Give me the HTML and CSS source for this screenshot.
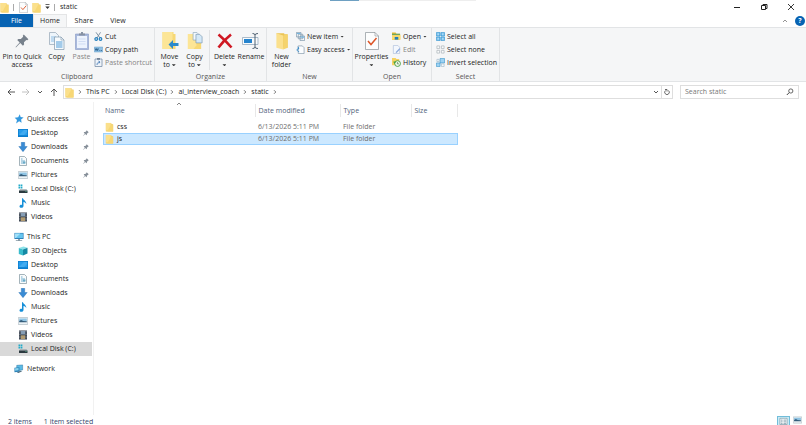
FILE: index.html
```html
<!DOCTYPE html>
<html lang="en">
<head>
<meta charset="utf-8">
<title>static</title>
<link rel="stylesheet" href="styles.css">
</head>
<body>
<svg class="sprite" aria-hidden="true">
  <symbol id="folder" viewBox="0 0 9 11"><path fill="#efcb60" d="M.5 1h6v1.500h2V10.500h-8z"/><path fill="#fbe08c" d="M.5 1h5.500v8.500H.5z"/><path fill="#f7d775" d="M6 3h2.500v7.500H2z"/></symbol>
  <symbol id="pin" viewBox="0 0 12 12"><path fill="#77818c" d="M7.500.5l4 4-1 .8-.8-.2-2 2 .1 2-1 1-2.300-2.300L.8 11.500l-.3-.3L4 7.300 1.900 5.200l1-1 2.100.1 2-2-.3-.9z"/></symbol>
  <symbol id="copy" viewBox="0 0 16 18"><path fill="#eef5fb" stroke="#93a5b5" stroke-width=".7" d="M.5.5h6l3 3v9h-9z"/><path fill="#bfdaf0" d="M2 4h5v6H2z"/><path fill="#f6fafd" stroke="#7f98ad" stroke-width=".7" d="M5.500 5h6.500l3 3v9.500H5.500z"/><path fill="#a3cbea" d="M7 9h6.500v7H7z"/><path fill="none" stroke="#7f98ad" stroke-width=".6" d="M12 5v3h3"/></symbol>
  <symbol id="paste" viewBox="0 0 14 18"><path fill="#a9b9dc" stroke="#8799c4" stroke-width=".6" d="M.5 2h13v15.500H.5z"/><path fill="#edf3fd" d="M2 4h10v12H2z"/><path fill="#8792a3" d="M4 1.500h2V0h2v1.500h2v2H4z"/><path stroke="#c4d2ee" stroke-width=".7" d="M3.500 7h7M3.500 9.500h7M3.500 12h7"/></symbol>
  <symbol id="cut" viewBox="0 0 9 9"><path fill="none" stroke="#8194a5" d="M2 .3L6 6M6.500.3L3 6"/><g fill="none" stroke="#237fbd" stroke-width="1.200"><circle cx="2.200" cy="7" r="1.300"/><circle cx="6.500" cy="7" r="1.300"/></g></symbol>
  <symbol id="path" viewBox="0 0 9 7"><path fill="#8fc1e5" stroke="#669dc4" stroke-width=".5" d="M.3 1h8.400v5H.3z"/><path fill="none" stroke="#174e7a" stroke-width=".8" d="M1.200 2.500l.8 2 .8-2 .8 2 .8-2M5.500 4.500h.8m.8 0h.8"/></symbol>
  <symbol id="shortcut" viewBox="0 0 9 9"><path fill="#eef3f9" stroke="#7890aa" stroke-width=".8" d="M1 1h7v7.500H1z"/><path fill="#728295" d="M3 0h3v1.800H3z"/><path fill="none" stroke="#5082ba" stroke-width=".9" d="M3 7c0-2 1-3 3-3M4.500 3L6 4 4.800 5.500"/></symbol>
  <symbol id="move" viewBox="0 0 17 18"><path fill="#f7d875" d="M1 0h11v2h2v15H1z"/><path fill="#fce596" d="M1 0h10v14l-3 3H1z"/><path fill="#2d8acb" d="M7 12.500L11.500 8v3H17v3h-5.500v3z"/></symbol>
  <symbol id="copyto" viewBox="0 0 17 19"><path fill="#f7d875" d="M1 2h10v2h4v14H1z"/><path fill="#fce596" d="M1 2h9v12l-3 4H1z"/><path fill="#f2f8fd" stroke="#8ba5ba" stroke-width=".7" d="M6.500.5h4l2 2v6h-6z"/><path fill="#d4e8f7" stroke="#7897b1" stroke-width=".7" d="M9.500 2.500h4l2.500 2.500v6.500H9.500z"/></symbol>
  <symbol id="delete" viewBox="0 0 16 16"><path fill="none" stroke="#cf1823" stroke-width="2.600" d="M1.500 1.500Q8 7 14.500 14.500M14 1.500Q7 7 1.500 14.500"/></symbol>
  <symbol id="rename" viewBox="0 0 18 17"><path fill="#f8fbfd" stroke="#8aa1b4" stroke-width=".7" d="M.5 5h15.500v7H.5z"/><path fill="#2584ce" d="M2 6.500h8v4H2z"/><path fill="none" stroke="#506273" d="M10.500 1q2.500 0 2.500 1.500v12q0 1.500-2.500 1.500M16 1q-3 0-3 1.500M16 16q-3 0-3-1.500"/></symbol>
  <symbol id="newfolder" viewBox="0 0 12 16"><path fill="#ebc454" d="M1 1h7v1h3v12H7z"/><path fill="#fbe08d" d="M1 1l6 2v12.500L1 14z"/><path fill="#f5d36c" d="M7 3l4-1v12l-4 1.500z"/></symbol>
  <symbol id="newitem" viewBox="0 0 10 10"><path fill="#f5f9fc" stroke="#708b9f" stroke-width=".7" d="M.5.5h5v5h-5zM2.500 2.500h5v5h-5zM4.500 4.500h5v5h-5z"/><path fill="#75b5df" d="M1 1h4v1.200H1zM5 5h4v1.300H5z"/></symbol>
  <symbol id="easy" viewBox="0 0 9 10"><path fill="#fbfdff" stroke="#7890a2" stroke-width=".7" d="M2 1h4.500l2 2v6.500H2z"/><path fill="none" stroke="#2e86c7" d="M3 7.500C0 7 .3 4 2.500 3.500M1.300 2.300l1.500 1L1.700 5"/></symbol>
  <symbol id="properties" viewBox="0 0 14 18"><path fill="#fcfdfd" stroke="#8b9298" stroke-width=".7" d="M.5.5h9.500l3.500 3.500v13.500H.5z"/><path fill="none" stroke="#8b9298" stroke-width=".6" d="M10 .5V4h3.500"/><path fill="none" stroke="#dc5528" stroke-width="1.500" d="M3 9l3 3.500L11.500 6"/></symbol>
  <symbol id="open" viewBox="0 0 10 9"><path fill="#e8b92e" d="M0 0h4l1 1.500h4V8H0z"/><path fill="#fbdc6e" d="M0 3h9.500v5H0z"/><path fill="#227fb9" d="M3 8V5h4v3z"/><path fill="#3aa078" d="M0 1.500h9v1H0z"/></symbol>
  <symbol id="edit" viewBox="0 0 9 10"><path fill="#f3f7fd" stroke="#a9badb" stroke-width=".7" d="M1 .5h5l2 2v7H1z"/><path fill="none" stroke="#89a8dc" stroke-width="1.500" d="M8.300 4L4 8.500"/></symbol>
  <symbol id="history" viewBox="0 0 10 10"><path fill="#f6d261" d="M0 0h4l1 1h3v7H0z"/><circle cx="6.200" cy="6.200" r="3.200" fill="#eef7e9" stroke="#459b42"/><path fill="none" stroke="#356f35" stroke-width=".7" d="M6 4.500v2h1.700"/><path fill="#45a33d" d="M1.500 4h3.200L2.500 6.800z"/></symbol>
  <symbol id="selall" viewBox="0 0 10 10"><path fill="#6ab8e9" stroke="#268bca" stroke-width=".6" d="M.5.5h4v4h-4zM5.500.5h4v4h-4zM.5 5.500h4v4h-4zM5.500 5.500h4v4h-4z"/><path fill="#a9d9f5" d="M1.500 1.500h2v2h-2zM6.500 1.500h2v2h-2zM1.500 6.500h2v2h-2zM6.500 6.500h2v2h-2z"/></symbol>
  <symbol id="selnone" viewBox="0 0 10 10"><path fill="#fafbfc" stroke="#a4adb4" stroke-width=".7" d="M1 1h3v3H1zM6 1h3v3H6zM1 6h3v3H1zM6 6h3v3H6z"/></symbol>
  <symbol id="selinv" viewBox="0 0 10 10"><path fill="#9dd2f3" stroke="#2889c4" stroke-width=".6" d="M4.500.5h5v5h-5zM.5 5.500h4v4h-4z"/><path fill="#f4f9fc" stroke="#8dacbf" stroke-width=".6" d="M1 1.500h2.500v2.500H1zM6 6.500h3v3H6z"/></symbol>
  <symbol id="star" viewBox="0 0 10 10"><path fill="#3499df" d="M5.800.3l.8 2.800 3 .5-2.500 1.900.5 3.200-2.500-1.500-3 2.300.9-3.500L.7 3.700l3.500-.4z"/></symbol>
  <symbol id="desktop" viewBox="0 0 10 8"><path fill="#0b7ccd" d="M0 0h10v8H0z"/><path fill="#279dec" d="M.7.7h8.600v5.600H.7z"/><path fill="#42abf0" d="M1 6l5-5h3v2L6 6z"/></symbol>
  <symbol id="down" viewBox="0 0 9 10"><path fill="#398bd4" stroke="#246caf" stroke-width=".4" d="M2.800.3h3.400v4.200h2.500L4.500 9.700.3 4.500h2.500z"/></symbol>
  <symbol id="docs" viewBox="0 0 8 10"><path fill="#f8fbfc" stroke="#80949e" stroke-width=".7" d="M.5.5h5l2 2v7h-7z"/><path stroke="#4b9bc1" stroke-width=".8" d="M2 3h1.500M2 5h4M2 7h4"/><path fill="#69abc8" d="M4 5.500h2.500v2H4z"/></symbol>
  <symbol id="pics" viewBox="0 0 10 8"><path fill="#edf3f6" stroke="#a5b2bb" stroke-width=".6" d="M.3.5h9.400v7H.3z"/><path fill="#8fc4e4" d="M1.200 1.500h7.600v2.800H1.200z"/><path fill="#345d7b" d="M1.200 4l2-1 2 1 3.600.3v1H1.200z"/></symbol>
  <symbol id="disk" viewBox="0 0 10 9"><path fill="#22abc9" d="M.5 0h1.700v1.700H.5zM2.700 0h1.700v1.700H2.700zM.5 2.200h1.700v1.700H.5zM2.700 2.200h1.700v1.700H2.700z"/><path fill="#9ca8ad" d="M2 4.700h6.500l1 1.300H1z"/><path fill="#2b393f" d="M1 6h8.500v2.500H1z"/><path fill="#62d6a1" d="M7.500 6.800h1v.7h-1z"/></symbol>
  <symbol id="music" viewBox="0 0 9 10"><path fill="#168fd8" d="M3.500.2h1c.3 2 3.500 2.500 3.300 5.800-.6-1.500-1.800-2-2.800-2.100v4c0 2.200-4 2.600-4 .5 0-1.400 1.400-1.900 2.500-1.500z"/></symbol>
  <symbol id="video" viewBox="0 0 9 10"><path fill="#343d4a" d="M.5.5h8v9h-8z"/><path fill="#879eb5" d="M2.300 1h4.400v3.500H2.300z"/><path fill="#b19b70" d="M2.300 5.300h4.400V9H2.300z"/><path stroke="#d8dde2" stroke-width=".7" stroke-dasharray=".8 .8" d="M1.400 1v8M7.600 1v8"/></symbol>
  <symbol id="pc" viewBox="0 0 11 10"><path fill="#297bb5" d="M.5.5h10v6.700H.5z"/><path fill="#66c5ef" d="M1.200 1.200h8.600v5H1.200z"/><path fill="#a3e0f8" d="M1.200 1.200H7l-5 5h-.8z"/><path fill="#8295a2" d="M4.500 7.200h2v1.300H9v.8H2v-.8h2.500z"/></symbol>
  <symbol id="cube" viewBox="0 0 10 10"><path fill="#8ce2e9" d="M.8 2L5.500.5l4 1.200L5 3.500z"/><path fill="#39bccc" d="M.8 2L5 3.500v6L.8 8z"/><path fill="#1589a4" d="M5 3.500l4.500-1.800V7.500L5 9.500z"/></symbol>
  <symbol id="network" viewBox="0 0 11 10"><path fill="#5abbe6" stroke="#276e9b" stroke-width=".5" d="M3 1l6.500-.5V6L3 7z"/><path fill="#2e83b8" d="M.5 3.500L6 3v5L.5 8.500z"/><path fill="#88d4ef" d="M1.200 4.200L5 3.800v2.700l-3.800.5z"/><path fill="#526f80" d="M7 7l2 .5-4 2-2-.7z"/></symbol>
  <symbol id="smallpin" viewBox="0 0 6 6"><path fill="#87909a" d="M3.700.3l2 2-.6.4-1.200 1v1l-.5.5-1.200-1.100L.5 5.700.2 5.500l1.600-1.800L.7 2.600l.6-.5h1l1-1.200z"/></symbol>
  <symbol id="chev" viewBox="0 0 6 6"><path fill="none" stroke="currentColor" stroke-width=".9" d="M1 2l2 2 2-2"/></symbol>
  <symbol id="next" viewBox="0 0 4 6"><path fill="none" stroke="#555" stroke-width=".8" d="M1 1.200L2.800 3 1 4.800"/></symbol>
  <symbol id="back" viewBox="0 0 8 8"><path fill="none" stroke="currentColor" stroke-width=".9" d="M8 4H1M4 1L1 4l3 3"/></symbol>
</svg>
<div class="window">
  <header class="titlebar">
    <svg class="i9"><use href="#folder"/></svg><span class="bar"></span>
    <button class="quick" aria-label="Properties"><svg class="i9"><use href="#properties"/></svg></button>
    <button class="quick" aria-label="New folder"><svg class="i9"><use href="#folder"/></svg></button>
    <button class="custom" aria-label="Customize"><svg viewBox="0 0 5 6"><path fill="#333" d="M.5 0h4v.8h-4zM.3 2.500h4.400L2.500 5z"/></svg></button><span class="bar"></span>
    <h1>static</h1>
    <span class="progress"><i></i></span>
    <div class="controls">
      <button aria-label="Minimize"><svg viewBox="0 0 8 8"><path stroke="#222" d="M1 4.500h6"/></svg></button>
      <button aria-label="Restore"><svg viewBox="0 0 8 8"><path fill="none" stroke="#222" d="M1.500 2.500h4v4h-4zM3 2.500v-1h4v4H5.500"/></svg></button>
      <button aria-label="Close"><svg viewBox="0 0 8 8"><path stroke="#222" stroke-width=".9" d="M1 1l6 6M7 1L1 7"/></svg></button>
    </div>
  </header>
  <nav class="tabs">
    <button class="file">File</button><button class="active">Home</button><button>Share</button><button>View</button>
    <span class="grow"></span>
    <button class="collapse" aria-label="Collapse ribbon"><svg class="i6 flip"><use href="#chev"/></svg></button>
    <button class="help">?</button>
  </nav>
  <section class="ribbon">
    <div class="group clipboard">
      <div class="tools">
        <button class="big pinbtn"><svg><use href="#pin"/></svg><span>Pin to Quick<br>access</span></button>
        <button class="big"><svg><use href="#copy"/></svg><span>Copy</span></button>
        <button class="big muted"><svg><use href="#paste"/></svg><span>Paste</span></button>
        <div class="stack"><button><svg><use href="#cut"/></svg>Cut</button><button><svg><use href="#path"/></svg>Copy path</button><button class="muted"><svg><use href="#shortcut"/></svg>Paste shortcut</button></div>
      </div><h2>Clipboard</h2>
    </div>
    <div class="group organize">
      <div class="tools">
        <button class="big"><svg><use href="#move"/></svg><span>Move<br>to <i class="caret"></i></span></button>
        <button class="big"><svg><use href="#copyto"/></svg><span>Copy<br>to <i class="caret"></i></span></button>
        <span class="divider"></span>
        <button class="big"><svg class="small"><use href="#delete"/></svg><span>Delete<br><i class="caret"></i></span></button>
        <button class="big wide"><svg><use href="#rename"/></svg><span>Rename</span></button>
      </div><h2>Organize</h2>
    </div>
    <div class="group new">
      <div class="tools">
        <button class="big"><svg><use href="#newfolder"/></svg><span>New<br>folder</span></button>
        <div class="stack"><button><svg><use href="#newitem"/></svg>New item <i class="caret"></i></button><button><svg><use href="#easy"/></svg>Easy access <i class="caret"></i></button></div>
      </div><h2>New</h2>
    </div>
    <div class="group opening">
      <div class="tools">
        <button class="big props"><svg><use href="#properties"/></svg><span>Properties<br><i class="caret"></i></span></button>
        <div class="stack"><button><svg><use href="#open"/></svg>Open <i class="caret"></i></button><button class="muted"><svg><use href="#edit"/></svg>Edit</button><button><svg><use href="#history"/></svg>History</button></div>
      </div><h2>Open</h2>
    </div>
    <div class="group select">
      <div class="tools">
        <div class="stack"><button><svg><use href="#selall"/></svg>Select all</button><button><svg><use href="#selnone"/></svg>Select none</button><button><svg><use href="#selinv"/></svg>Invert selection</button></div>
      </div><h2>Select</h2>
    </div>
  </section>
  <section class="location">
    <div class="arrows">
      <button aria-label="Back"><svg class="i8"><use href="#back"/></svg></button>
      <button class="off" aria-label="Forward"><svg class="i8 flip"><use href="#back"/></svg></button>
      <button aria-label="Recent locations"><svg class="i6"><use href="#chev"/></svg></button>
      <button aria-label="Up"><svg class="i8 turn"><use href="#back"/></svg></button>
    </div>
    <div class="address">
      <svg class="i9"><use href="#folder"/></svg><svg class="next"><use href="#next"/></svg><a href="#">This PC</a><svg class="next"><use href="#next"/></svg><a href="#">Local Disk (C:)</a><svg class="next"><use href="#next"/></svg><a href="#">ai_interview_coach</a><svg class="next"><use href="#next"/></svg><a href="#">static</a><svg class="next"><use href="#next"/></svg>
      <span class="grow"></span>
      <button aria-label="Previous locations"><svg class="i6"><use href="#chev"/></svg></button>
      <button class="refresh" aria-label="Refresh"><svg class="i6" viewBox="0 0 6 6"><path fill="none" stroke="#444" stroke-width=".8" d="M1.500 1.500A2.300 2.300 0 1 0 4.500 1.500M1 .5h2v2"/></svg></button>
    </div>
    <label class="search"><input type="text" placeholder="Search static" aria-label="Search static"><svg class="i8" viewBox="0 0 8 8"><circle cx="4.800" cy="3" r="2.100" fill="none" stroke="#444" stroke-width=".8"/><path stroke="#444" d="M3.300 4.500L.8 7"/></svg></label>
  </section>
  <main class="content">
    <nav class="sidebar">
      <a href="#" class="root"><svg><use href="#star"/></svg>Quick access</a>
      <a href="#"><svg><use href="#desktop"/></svg>Desktop<svg class="pinned"><use href="#smallpin"/></svg></a>
      <a href="#"><svg><use href="#down"/></svg>Downloads<svg class="pinned"><use href="#smallpin"/></svg></a>
      <a href="#"><svg><use href="#docs"/></svg>Documents<svg class="pinned"><use href="#smallpin"/></svg></a>
      <a href="#"><svg><use href="#pics"/></svg>Pictures<svg class="pinned"><use href="#smallpin"/></svg></a>
      <a href="#"><svg><use href="#disk"/></svg>Local Disk (C:)</a>
      <a href="#"><svg><use href="#music"/></svg>Music</a>
      <a href="#"><svg><use href="#video"/></svg>Videos</a>
      <a href="#" class="root"><svg><use href="#pc"/></svg>This PC</a>
      <a href="#"><svg><use href="#cube"/></svg>3D Objects</a>
      <a href="#"><svg><use href="#desktop"/></svg>Desktop</a>
      <a href="#"><svg><use href="#docs"/></svg>Documents</a>
      <a href="#"><svg><use href="#down"/></svg>Downloads</a>
      <a href="#"><svg><use href="#music"/></svg>Music</a>
      <a href="#"><svg><use href="#pics"/></svg>Pictures</a>
      <a href="#"><svg><use href="#video"/></svg>Videos</a>
      <a href="#" class="current"><svg><use href="#disk"/></svg>Local Disk (C:)</a>
      <a href="#" class="root"><svg><use href="#network"/></svg>Network</a>
    </nav>
    <div class="files">
      <table>
        <colgroup><col class="c-name"><col class="c-date"><col class="c-type"><col></colgroup>
        <thead><tr><th>Name<svg class="i6 sort"><use href="#chev"/></svg></th><th>Date modified</th><th>Type</th><th>Size</th></tr></thead>
        <tbody>
          <tr><td><span class="name"><svg class="i9"><use href="#folder"/></svg>css</span></td><td>6/13/2026 5:11 PM</td><td>File folder</td><td></td></tr>
          <tr class="selected"><td><span class="name"><svg class="i9"><use href="#folder"/></svg>js</span></td><td>6/13/2026 5:11 PM</td><td>File folder</td><td></td></tr>
        </tbody>
      </table>
    </div>
  </main>
  <footer class="status"><span>2 items</span><span>1 item selected</span><span class="grow"></span>
    <button class="view on" aria-label="Details"><svg viewBox="0 0 10 8"><path fill="#fff" stroke="#72909c" stroke-width=".7" d="M1 1h8v7H1z"/><path stroke="#547e91" stroke-width=".8" d="M2 3h2M5 3h3M2 5h2M5 5h3M2 7h2M5 7h3"/></svg></button>
    <button class="view" aria-label="Large icons"><svg><use href="#pics"/></svg></button>
  </footer>
</div>
</body>
</html>
```
FILE: styles.css
```css
* { box-sizing: border-box; }
body { margin: 0; background: #fff; color: #1c1c1c; font: 7px/8px "Open Sans", "Noto Sans", sans-serif; }
button, input { font: inherit; color: inherit; border: 0; padding: 0; margin: 0; background: none; }
a { color: inherit; text-decoration: none; }
h1, h2 { margin: 0; font: inherit; }
svg { display: block; flex: none; }
.sprite { position: absolute; width: 0; height: 0; }
.grow { flex: 1; }
.i6 { width: 6px; height: 6px; }
.i8 { width: 8px; height: 8px; }
.i9 { width: 9px; height: 11px; }
.flip { transform: rotate(180deg); }
.turn { transform: rotate(90deg); }
.window { height: 100vh; display: flex; flex-direction: column; overflow: hidden; }
.window > * { flex: none; }

.titlebar { position: relative; height: 14px; display: flex; align-items: center; }
.bar { width: 1px; height: 7px; margin: 0 5px 0 4px; background: #aaa; }
.quick { margin-right: 4px; }
.custom { width: 5px; }
.custom svg { width: 5px; height: 6px; }
.progress { position: absolute; top: 0; left: 41%; width: 18%; height: 1px; background: #eee; }
.progress i { display: block; width: 20%; height: 1px; background: #6ea0c2; }
.controls { margin-left: auto; padding-right: 2px; display: flex; }
.controls button { width: 27px; height: 12px; display: grid; place-items: center; }
.controls svg { width: 8px; height: 8px; }

.tabs { height: 13px; display: flex; }
.tabs button { width: 34px; }
.tabs .file { width: 33px; background: #0763b3; color: #fff; }
.tabs .active { background: #f5f6f7; border: solid #e4e5e6; border-width: 1px 1px 0; }
.tabs .collapse { width: 6px; color: #888; display: grid; place-items: center; }
.tabs .help { align-self: center; width: 10px; height: 10px; margin: 0 1px 0 7px; border-radius: 50%; background: #0763b3; color: #fff; font-weight: 700; }

.ribbon { height: 55px; display: flex; background: #f5f6f7; border: solid #e2e4e6; border-width: 1px 0; }
.group { display: flex; flex-direction: column; padding-top: 2px; border-right: 1px solid #e2e4e6; }
.group h2 { text-align: center; color: #555; line-height: 9px; }
.tools { flex: 1; display: flex; }
.clipboard { width: 155px; }
.organize { width: 112px; }
.new { width: 86px; }
.opening { width: 79px; }
.select { width: 68px; }
.big { width: 25px; display: flex; flex-direction: column; align-items: center; gap: 3px; padding-top: 2px; white-space: nowrap; }
.big svg { width: 18px; height: 18px; }
.big svg.small { height: 16px; margin: 1px 0; }
.pinbtn { width: 44px; }
.pinbtn svg { padding: 2px; }
.props { width: 37px; }
.wide { width: 28px; }
.muted { color: #858585; }
.organize .tools { padding-left: 2px; }
.new .tools { padding-left: 2px; }
.divider { width: 1px; height: 40px; margin: 0 2px; background: #e0e2e4; }
.stack { display: flex; flex-direction: column; margin-left: 2px; }
.clipboard .stack { margin-left: 0; }
.select .stack { margin-left: 4px; }
.stack button { height: 13px; display: flex; align-items: center; gap: 2px; white-space: nowrap; }
.stack svg { width: 9px; height: 9px; }
.caret { display: inline-block; width: 4px; height: 2px; vertical-align: middle; background: #333; clip-path: polygon(0 0, 100% 0, 50% 100%); }

.location { display: flex; align-items: center; height: 20px; padding: 0 7px; }
.arrows { display: flex; align-items: center; gap: 7px; width: 56px; color: #444; }
.arrows .off { color: #bbb; }
.address { flex: 1; height: 14px; display: flex; align-items: center; border: 1px solid #dedede; padding-left: 1px; }
.next { width: 4px; height: 6px; margin: 0 4px; }
.address button { height: 12px; padding: 0 2px; color: #444; }
.address .refresh { border-left: 1px solid #dedede; }
.search { width: 119px; height: 14px; margin-left: 7px; display: flex; align-items: center; border: 1px solid #dedede; padding: 0 4px; }
.search input { flex: 1; min-width: 0; outline: 0; }
.search input::placeholder { color: #777; opacity: 1; }

.window > .content { flex: 1; min-height: 0; display: flex; }
.sidebar { width: 94px; border-right: 1px solid #f1f1f1; padding: 10px 1px 0 0; overflow: hidden; }
.sidebar a { height: 14px; display: flex; align-items: center; gap: 3px; padding: 0 3px 0 18px; }
.sidebar .root { padding-left: 14px; }
.sidebar a + .root { margin-top: 6px; }
.sidebar svg { width: 10px; height: 10px; }
.sidebar .pinned { width: 6px; height: 6px; margin-left: auto; }
.sidebar .current { background: #d9d9d9; }
.files { flex: 1; padding: 2px 0 0 9px; }
table { width: 355px; table-layout: fixed; border-collapse: collapse; }
.c-name { width: 152px; }
.c-date { width: 85px; }
.c-type { width: 71px; }
th { position: relative; height: 13px; padding: 0 3px; text-align: left; font-weight: 400; color: #50627a; border-right: 1px solid #e8e8e8; }
th:first-child, td:first-child { padding-left: 2px; }
.sort { position: absolute; left: 48%; top: -3px; transform: rotate(180deg); color: #777; }
thead::after { content: ""; display: block; height: 4px; }
td { height: 12px; padding: 0 3px; color: #6d6d6d; }
.name { display: flex; align-items: center; gap: 3px; color: #222; }
.name svg { height: 10px; }
.selected { background: #cce8ff; outline: 1px solid #99d1ff; outline-offset: -1px; }

.status { height: 10px; display: flex; align-items: flex-start; gap: 12px; padding: 1px 4px 0 8px; color: #34456b; }
.status span { padding-top: 2px; }
.view { width: 9px; margin-left: -9px; }
.view svg { width: 9px; height: 8px; }
.view.on { width: 13px; padding: 0 1px; background: #c9ebf7; border: 1px solid #72bdd9; }
```
